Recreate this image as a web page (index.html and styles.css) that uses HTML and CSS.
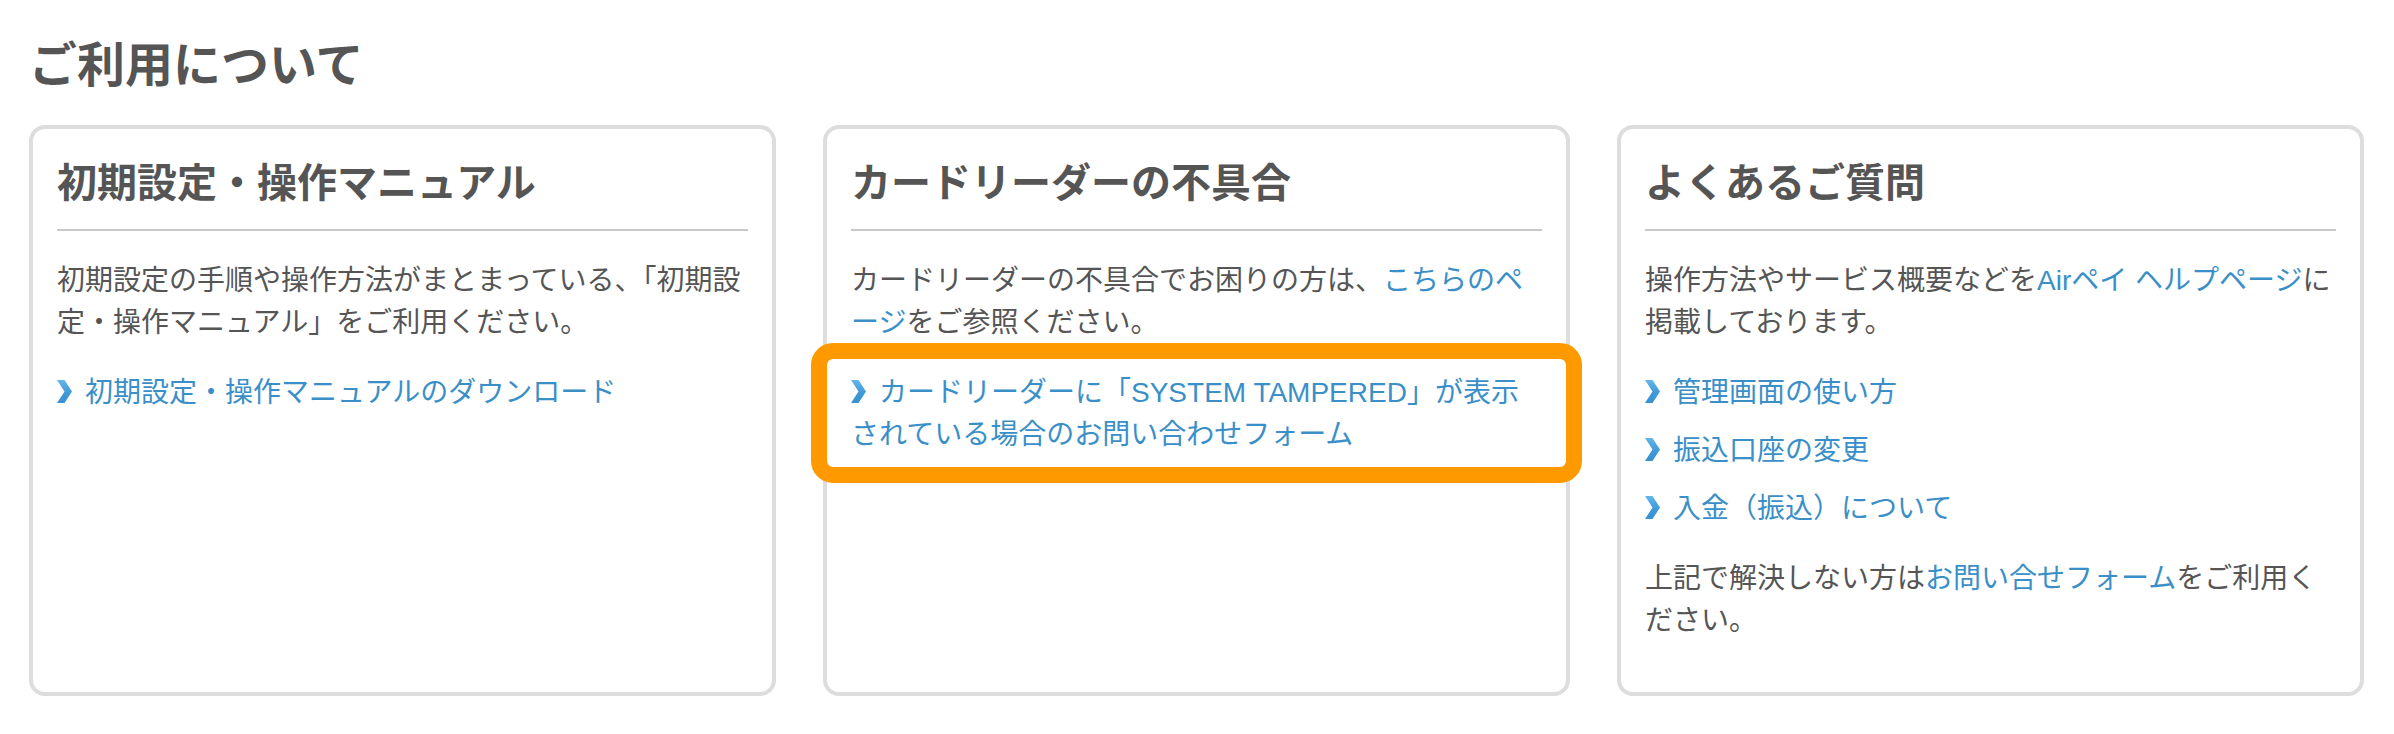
FILE: index.html
```html
<!DOCTYPE html>
<html lang="ja">
<head>
<meta charset="utf-8">
<title>ご利用について</title>
<link rel="stylesheet" href="styles.css">
</head>
<body>
<main class="page">
  <h1 class="title">ご利用について</h1>
  <div class="cards">
    <section class="card">
      <h2 class="card-title">初期設定・操作マニュアル</h2>
      <div class="card-body">
        <p class="text">初期設定の手順や操作方法がまとまっている、「初期設定・操作マニュアル」をご利用ください。</p>
        <ul class="links">
          <li><a class="link" href="#">初期設定・操作マニュアルのダウンロード</a></li>
        </ul>
      </div>
    </section>
    <section class="card">
      <h2 class="card-title">カードリーダーの不具合</h2>
      <div class="card-body">
        <p class="text">カードリーダーの不具合でお困りの方は、<a class="inline-link" href="#">こちらのページ</a>をご参照ください。</p>
        <ul class="links">
          <li class="highlight"><a class="link" href="#">カードリーダーに「SYSTEM TAMPERED」が表示されている場合のお問い合わせフォーム</a></li>
        </ul>
      </div>
    </section>
    <section class="card">
      <h2 class="card-title">よくあるご質問</h2>
      <div class="card-body">
        <p class="text">操作方法やサービス概要などを<a class="inline-link" href="#">Airペイ ヘルプページ</a>に掲載しております。</p>
        <ul class="links">
          <li><a class="link" href="#">管理画面の使い方</a></li>
          <li><a class="link" href="#">振込口座の変更</a></li>
          <li><a class="link" href="#">入金（振込）について</a></li>
        </ul>
        <p class="text">上記で解決しない方は<a class="inline-link" href="#">お問い合せフォーム</a>をご利用ください。</p>
      </div>
    </section>
  </div>
</main>
</body>
</html>
```

FILE: styles.css
```css
html, body {
  margin: 0;
  padding: 0;
  background: #ffffff;
}

body {
  font-family: "Liberation Sans", "Noto Sans CJK JP", sans-serif;
  color: #555555;
}

.page {
  padding: 30px 30px 0 29px;
}

.title {
  margin: 0 0 23px;
  font-size: 48px;
  line-height: 72px;
  font-weight: 700;
  color: #555555;
}

.cards {
  display: grid;
  grid-template-columns: repeat(3, 1fr);
  column-gap: 47px;
}

.card {
  border: 4px solid #dddddd;
  border-radius: 16px;
  padding: 24px 24px 50px;
  background: #ffffff;
}

.card-title {
  margin: 0;
  padding-bottom: 16px;
  border-bottom: 2px solid #c8c8c8;
  font-size: 40px;
  line-height: 60px;
  font-weight: 700;
  color: #555555;
}

.card-body {
  padding-top: 29px;
}

.text {
  margin: 0;
  font-size: 28px;
  line-height: 42px;
  color: #555555;
}

.links + .text {
  margin-top: 28px;
}

.inline-link {
  color: #3b8fc8;
  text-decoration: none;
}

.links {
  list-style: none;
  margin: 28px 0 0;
  padding: 0;
}

.links li {
  font-size: 28px;
  line-height: 42px;
}

.links li + li {
  margin-top: 16px;
}

.link {
  color: #3b8fc8;
  text-decoration: none;
}

.link::before {
  content: "";
  display: inline-block;
  width: 15px;
  height: 23px;
  margin-right: 13px;
  vertical-align: -1px;
  background: linear-gradient(180deg, #62b6ea 0%, #3f9ad9 55%, #3690d2 100%);
  clip-path: polygon(0 0, 50% 0, 100% 50%, 50% 100%, 0 100%, 50% 50%);
}

.highlight {
  position: relative;
}

.highlight::after {
  content: "";
  position: absolute;
  top: -29px;
  right: -40px;
  bottom: -27px;
  left: -40px;
  border: 16px solid #ff9900;
  border-radius: 22px;
  pointer-events: none;
}
```
